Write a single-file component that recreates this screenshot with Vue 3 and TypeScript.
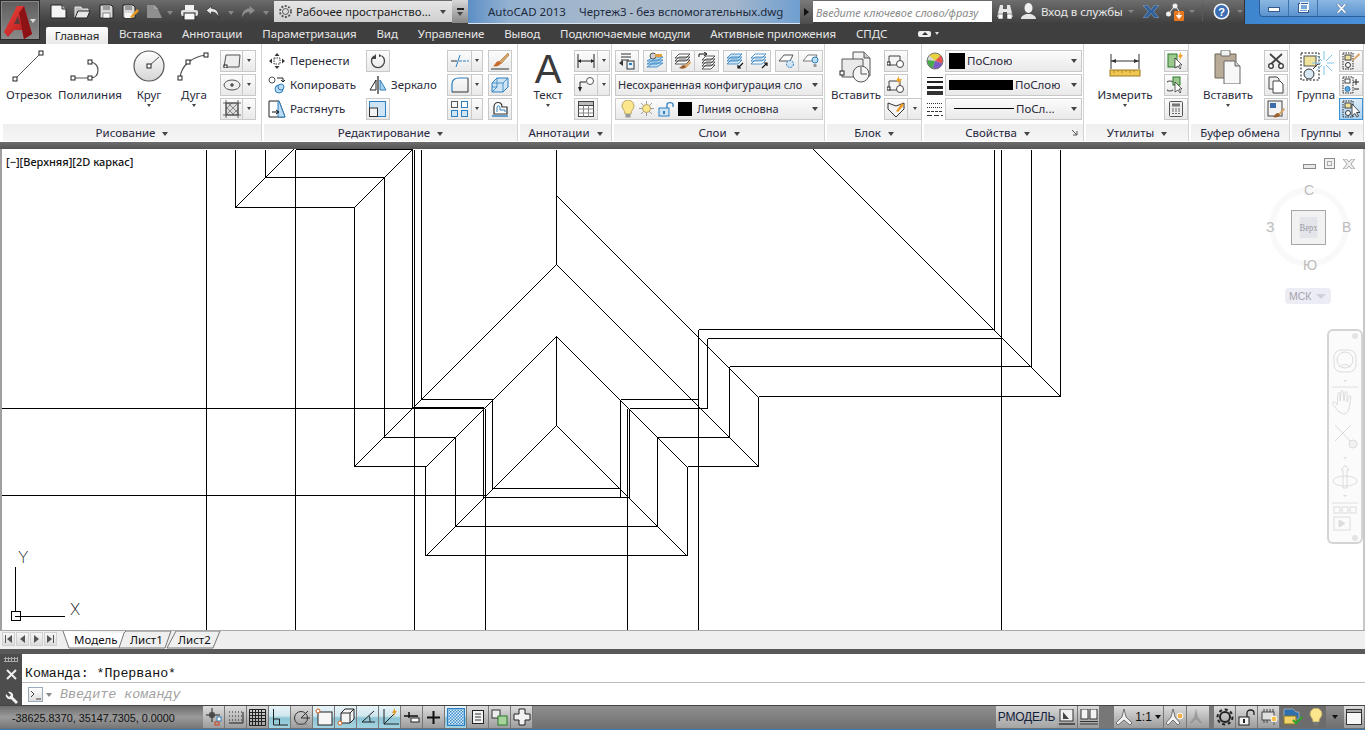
<script setup lang="ts">
type Seg = [number, number, number, number]

const tabs = ['Вставка', 'Аннотации', 'Параметризация', 'Вид', 'Управление', 'Вывод', 'Подключаемые модули', 'Активные приложения', 'СПДС']

// вертикали и горизонтали чертежа, в экранных координатах
const straight: Seg[] = [
  [206, 150, 206, 631], [295, 150, 295, 631], [235, 150, 235, 208], [265, 150, 265, 178],
  [295, 150, 412, 150], [265, 178, 384, 178], [235, 208, 354, 208],
  [354, 208, 354, 467], [384, 178, 384, 438], [412, 150, 412, 409], [414, 150, 414, 631],
  [421, 150, 421, 400], [556, 150, 556, 265], [556, 337, 556, 426],
  [421, 400, 492, 400], [492, 400, 492, 489], [492, 489, 620, 489], [620, 400, 620, 498],
  [620, 400, 698, 400], [0, 409, 484, 409], [413, 408, 483, 408], [629, 409, 707, 409],
  [483, 409, 483, 498], [485, 409, 485, 631], [627, 409, 627, 631], [629, 409, 629, 498],
  [0, 496, 484, 496], [484, 498, 629, 498],
  [698, 330, 698, 631], [707, 339, 707, 409], [729, 367, 729, 438], [758, 397, 758, 467],
  [384, 438, 455, 438], [657, 438, 729, 438], [354, 467, 425, 467], [687, 467, 758, 467],
  [455, 438, 455, 527], [425, 467, 425, 556], [657, 438, 657, 527], [687, 467, 687, 556],
  [455, 527, 657, 527], [425, 556, 687, 556],
  [698, 330, 994, 330], [707, 339, 1001, 339], [729, 367, 1031, 367], [758, 397, 1060, 397],
  [994, 150, 994, 330], [1001, 150, 1001, 631], [1031, 150, 1031, 367], [1060, 150, 1060, 397],
]

const diagonal: Seg[] = [
  [235, 208, 293, 150], [354, 208, 412, 150],
  [556, 265, 354, 467], [556, 337, 425, 468], [556, 426, 425, 557],
  [556, 265, 758, 467], [556, 337, 687, 468], [556, 426, 687, 557],
  [556, 196, 758, 398], [813, 150, 1060, 397],
]

const statusLeft = [1, 2, 3, 4, 5, 6, 7, 8, 9, 10, 11, 12, 13, 14, 15]
const activeStatus = [4, 6, 7, 8, 9, 12]
</script>

<template>
  <div class="app">
    <!-- кнопка приложения поверх обеих полос -->
    <div class="app-btn">
      <svg width="36" height="36" viewBox="0 0 36 36">
        <defs>
          <linearGradient id="redA" x1="0" y1="0" x2="1" y2="1">
            <stop offset="0" stop-color="#f2463f" />
            <stop offset="1" stop-color="#a51216" />
          </linearGradient>
        </defs>
        <path d="M15 3 L22 3 L30 31 L22 36 L20 27 L12 27 L6 34 L2 29 Z" fill="url(#redA)" />
        <path d="M22 3 L30 31 L22 36 L17 10 Z" fill="#8c1216" />
        <path d="M16 13 L18 21 L12 21 Z" fill="#5c3a3a" />
      </svg>
      <i class="caret light app-caret"></i>
    </div>

    <header class="title-bar">
      <div class="qat">
        <svg class="q-new" width="17" height="15" viewBox="0 0 17 15"><path d="M1 1h11l4 4v9H1z" fill="#f4f4f4" stroke="#222" /><path d="M12 1v4h4" fill="#bbb" stroke="#333" /></svg>
        <svg class="q-open" width="17" height="14" viewBox="0 0 17 14"><path d="M1 2h6l1 2h6v2H5L1 12z" fill="#bdbdbd" stroke="#e8e8e8" /><path d="M4 6h12l-3 7H1z" fill="#e6e6e6" stroke="#222" /></svg>
        <svg class="q-save" width="15" height="15" viewBox="0 0 15 15"><path d="M1 1h11l2 2v11H1z" fill="#d8d8d8" stroke="#222" /><rect x="4" y="1" width="7" height="5" fill="#9a9a9a" /><rect x="4" y="9" width="7" height="5" fill="#f5f5f5" stroke="#333" stroke-width=".5" /></svg>
        <svg class="q-saveas" width="17" height="15" viewBox="0 0 17 15"><path d="M1 1h10l2 2v11H1z" fill="#d8d8d8" stroke="#222" /><rect x="3" y="1" width="7" height="5" fill="#9a9a9a" /><rect x="3" y="9" width="7" height="5" fill="#f5f5f5" /><path d="M8 13l7-8 2 2-7 7z" fill="#e89a25" /></svg>
        <svg class="q-plot" width="16" height="15" viewBox="0 0 16 15"><path d="M1 1h7l4 4 4 9H1z" fill="#8f8f8f" /><path d="M8 1v4h4z" fill="#a8a8a8" /></svg>
        <i class="caret dim q-c1"></i>
        <svg class="q-print" width="17" height="15" viewBox="0 0 17 15"><rect x="4" y="0" width="9" height="5" fill="#f2f2f2" /><rect x="0" y="5" width="17" height="6" rx="2" fill="#e2e2e2" /><rect x="3" y="8" width="11" height="7" fill="#f7f7f7" stroke="#222" /></svg>
        <svg class="q-undo" width="16" height="14" viewBox="0 0 15 13"><path d="M6 1L1 5l5 4V6.500c3 0 5 1 7 5 0-6-3-8-7-8.500z" fill="#e8e8e8" stroke="#222" stroke-width=".6" /></svg>
        <i class="caret dim q-c2"></i>
        <svg class="q-redo" width="15" height="14" viewBox="0 0 14 13"><path d="M8 1l5 4-5 4V6.500c-3 0-5 1-7 5 0-6 3-8 7-8.500z" fill="#8d8d8d" /></svg>
        <i class="caret dim q-c3"></i>
      </div>
      <div class="workspace">
        <svg width="15" height="15" viewBox="0 0 15 15"><circle cx="7.500" cy="7.500" r="3" fill="none" stroke="#555" /><circle cx="7.500" cy="7.500" r="5.500" fill="none" stroke="#555" stroke-width="1.800" stroke-dasharray="2 1.500" /></svg>
        <span>Рабочее пространство...</span>
        <i class="caret"></i>
      </div>
      <div class="qat-more"><i class="more-bar"></i><i class="caret"></i></div>
      <div class="glass"><span>AutoCAD 2013</span><span class="doc">Чертеж3 - без вспомогательных.dwg</span></div>
      <div class="arrow-btn"><i class="caret-r"></i></div>
      <div class="search">Введите ключевое слово/фразу</div>
      <div class="info">
        <svg class="i-bino" width="16" height="16" viewBox="0 0 16 16"><path d="M3 1h3v4h4V1h3l3 12h-6V8H6v5H0z" fill="#e6e6e6" /><rect x="1" y="10" width="5" height="5" fill="#fff" stroke="#333" stroke-width=".5" /><rect x="10" y="10" width="5" height="5" fill="#fff" stroke="#333" stroke-width=".5" /></svg>
        <svg class="i-user" width="17" height="17" viewBox="0 0 17 17"><ellipse cx="8.500" cy="5" rx="4" ry="5" fill="#f0f0f0" /><path d="M1 16c0-3 3-4 5-5h5c2 1 5 2 5 5z" fill="#e4e4e4" /></svg>
        <span class="signin">Вход в службы</span>
        <i class="caret dim c-a"></i>
        <svg class="i-x" width="16" height="13" viewBox="0 0 18 14"><path d="M0 0h5l4 5 4-5h5l-6 7 6 7h-5L9 9l-4 5H0l6-7z" fill="#2f5f9a" stroke="#a8c4e6" stroke-width=".5" /></svg>
        <svg class="i-link" width="20" height="18" viewBox="0 0 20 18"><circle cx="2.500" cy="11" r="2.500" fill="#eee" /><circle cx="9" cy="3" r="2.500" fill="#eee" /><path d="M3 10l5-6M10 4l3 4" stroke="#eee" /><rect x="8" y="8" width="10" height="10" rx="1" fill="#e8791e" /><path d="M13 9.500v4M10.500 12.500l2.500 3 2.500-3z" fill="#fff" stroke="#fff" /></svg>
        <i class="caret dim c-b"></i>
        <i class="i-sep"></i>
        <svg class="i-help" width="17" height="17" viewBox="0 0 17 17"><circle cx="8.500" cy="8.500" r="8" fill="#f2f6fb" /><circle cx="8.500" cy="8.500" r="6.500" fill="#3c6eb4" /><text x="8.500" y="13" text-anchor="middle" class="help-q">?</text></svg>
        <i class="caret dim c-c"></i>
      </div>
      <div class="frame">
        <div class="frame-btns">
          <span class="f-min"><i></i></span>
          <span class="f-max"><i></i><b></b></span>
          <span class="f-close">
            <svg width="11" height="9" viewBox="0 0 11 9"><path d="M0 0h3l2.500 3L8 0h3L7 4.500 11 9H8L5.500 6 3 9H0l4-4.500z" fill="#fff" stroke="#36598a" stroke-width=".5" /></svg>
          </span>
        </div>
      </div>
    </header>

    <nav class="tabs">
      <span class="tab active">Главная</span>
      <span v-for="t in tabs" :key="t" class="tab">{{ t }}</span>
      <span class="tab-toggle"><i class="pill"><i class="caret-up"></i></i><i class="caret light"></i></span>
    </nav>

    <section class="ribbon">
      <!-- Рисование -->
      <div class="panel p-draw">
        <div class="body">
          <div class="big w-48">
            <div class="big-ico"><svg width="40" height="34" viewBox="0 0 40 34"><path d="M6 29L32 3" stroke="#555" fill="none" /><rect x="4" y="27" width="4" height="4" fill="#fff" stroke="#222" /><rect x="30" y="1" width="4" height="4" fill="#fff" stroke="#222" /></svg></div>
            <span>Отрезок</span>
          </div>
          <div class="big w-64 ml-5">
            <div class="big-ico"><svg width="40" height="34" viewBox="0 0 40 34"><path d="M3 28h17c6 0 8-4 8-8s-3-8-8-8" stroke="#555" stroke-width="1.200" fill="none" /><rect x="1" y="26" width="4" height="4" fill="#fff" stroke="#222" /><rect x="18" y="26" width="4" height="4" fill="#fff" stroke="#222" /><rect x="18" y="10" width="4" height="4" fill="#fff" stroke="#222" /></svg></div>
            <span>Полилиния</span>
          </div>
          <div class="big w-54">
            <div class="big-ico"><svg width="34" height="34" viewBox="0 0 34 34"><defs><linearGradient id="cg" x1="0" y1="0" x2="0" y2="1"><stop offset="0" stop-color="#fff" /><stop offset="1" stop-color="#d4d4d4" /></linearGradient></defs><circle cx="17" cy="16" r="15" fill="url(#cg)" stroke="#555" stroke-width="1.200" /><path d="M17 16L27 7" stroke="#555" /><rect x="15" y="14" width="4" height="4" fill="#fff" stroke="#222" /></svg></div>
            <span>Круг</span><i class="caret"></i>
          </div>
          <div class="big w-36">
            <div class="big-ico"><svg width="34" height="34" viewBox="0 0 34 34"><path d="M3 28C4 16 14 7 29 5" stroke="#555" stroke-width="1.200" fill="none" /><rect x="1" y="26" width="4" height="4" fill="#fff" stroke="#222" /><rect x="9" y="10" width="4" height="4" fill="#fff" stroke="#222" /><rect x="27" y="3" width="4" height="4" fill="#fff" stroke="#222" /></svg></div>
            <span>Дуга</span><i class="caret"></i>
          </div>
          <div class="col ml-8">
            <div class="split"><span class="btn w23"><svg width="18" height="14" viewBox="0 0 18 14"><path d="M3 1h14l-1 12H1z" fill="#eee" stroke="#555" /><rect x="1" y="11" width="3" height="3" fill="#fff" stroke="#222" /></svg></span><span class="drop w13"><i class="caret"></i></span></div>
            <div class="split"><span class="btn w23"><svg width="18" height="12" viewBox="0 0 18 12"><ellipse cx="9" cy="6" rx="8" ry="5" fill="#eee" stroke="#555" /><path d="M7 6h4M9 4v4" stroke="#222" /></svg></span><span class="drop w13"><i class="caret"></i></span></div>
            <div class="split"><span class="btn w23"><svg width="18" height="18" viewBox="0 0 18 18"><rect x="3" y="3" width="12" height="12" fill="#ddd" stroke="#555" /><path d="M3 9l6-6M3 15L15 3M9 15l6-6M5 3l10 10M3 7l8 8" stroke="#666" stroke-width=".7" /><path d="M0 3h18M0 15h18M3 0v18M15 0v18" stroke="#444" stroke-width=".8" /></svg></span><span class="drop w13"><i class="caret"></i></span></div>
          </div>
        </div>
        <div class="title">Рисование <i class="caret"></i></div>
      </div>

      <!-- Редактирование -->
      <div class="panel p-edit">
        <div class="body pl-4">
          <div class="col w-98">
            <div class="rowitem"><svg width="18" height="18" viewBox="0 0 18 18"><path d="M9 1l2.500 3h-5zM9 17l2.500-3h-5zM1 9l3-2.500v5zM17 9l-3-2.500v5z" fill="#333" /><rect x="6" y="6" width="6" height="6" fill="#fff" stroke="#333" stroke-dasharray="1.500 1" /></svg><span>Перенести</span></div>
            <div class="rowitem"><svg width="18" height="18" viewBox="0 0 18 18"><circle cx="4" cy="4" r="3" fill="#fff" stroke="#555" /><circle cx="11" cy="13" r="4" fill="#bcdcf2" stroke="#2c7fc0" /><circle cx="13" cy="11" r="3" fill="#bcdcf2" stroke="#2c7fc0" /><path d="M9 2h6v3M13 4l2 2 2-2" stroke="#222" fill="none" /></svg><span>Копировать</span></div>
            <div class="rowitem"><svg width="18" height="18" viewBox="0 0 18 18"><path d="M1 1h10l6 16H1z" fill="#fff" stroke="#222" /><path d="M10 1h1l6 16h-7z" fill="#bcdcf2" stroke="#2c7fc0" /><path d="M4 12h6M8 10l3 2-3 2" stroke="#111" fill="none" /></svg><span>Растянуть</span></div>
          </div>
          <div class="col w-76">
            <span class="btn w24"><svg width="16" height="16" viewBox="0 0 16 16"><path d="M4 3a6.500 6.500 0 1 0 8 0" stroke="#444" stroke-width="1.300" fill="none" /><path d="M5 0v5H0z" fill="#444" transform="translate(1 1)" /><path d="M9 1l3 2-3 1" fill="#444" /></svg></span>
            <div class="rowitem mirror"><svg width="18" height="18" viewBox="0 0 18 18"><path d="M9 0v18" stroke="#222" stroke-width="1.200" /><path d="M7 4v10H1z" fill="#fff" stroke="#222" /><path d="M11 4v10h6z" fill="#a8d3ef" stroke="#2c7fc0" /></svg><span>Зеркало</span></div>
            <span class="btn w24"><svg width="18" height="16" viewBox="0 0 18 16"><rect x=".5" y=".5" width="16" height="15" fill="#cfe4f4" stroke="#2c7fc0" /><rect x=".5" y="7" width="8" height="8.500" fill="#f4f4f4" stroke="#333" /></svg></span>
          </div>
          <div class="col ml-5">
            <div class="split"><span class="btn w25"><svg width="18" height="14" viewBox="0 0 18 14"><path d="M0 7h6" stroke="#333" /><path d="M8 7h10" stroke="#2c7fc0" stroke-dasharray="3 1" /><path d="M5 13l4-12" stroke="#2c7fc0" /></svg></span><span class="drop w11"><i class="caret"></i></span></div>
            <div class="split"><span class="btn w25"><svg width="18" height="16" viewBox="0 0 18 16"><path d="M1 15V7c0-4 3-6 7-6h9" fill="none" stroke="#2c7fc0" stroke-width="1.200" /><path d="M17 1v14" stroke="#333" /><path d="M1 15h16" stroke="#333" /></svg></span><span class="drop w11"><i class="caret"></i></span></div>
            <div class="split"><span class="btn w25"><svg width="18" height="16" viewBox="0 0 18 16"><rect x=".5" y=".5" width="6" height="6" fill="none" stroke="#555" /><rect x="10.500" y=".5" width="6" height="6" fill="#fff" stroke="#2c7fc0" /><rect x=".5" y="9.500" width="6" height="6" fill="#cfe4f4" stroke="#2c7fc0" /><rect x="10.500" y="9.500" width="6" height="6" fill="#cfe4f4" stroke="#2c7fc0" /></svg></span><span class="drop w11"><i class="caret"></i></span></div>
          </div>
          <div class="col ml-5">
            <span class="btn w24"><svg width="18" height="18" viewBox="0 0 18 18"><path d="M17 1l-9 9 2 2 8-9z" fill="#d9a465" stroke="#8a5a2a" stroke-width=".5" /><path d="M8 9c-3 0-3 3-6 5 3 1 7 0 8-3z" fill="#c96b2c" /><path d="M0 17h18" stroke="#333" /></svg></span>
            <span class="btn w24"><svg width="18" height="16" viewBox="0 0 18 16"><path d="M1 6l5-5h11v9l-5 5H1z" fill="#cfe4f4" stroke="#2c7fc0" /><path d="M1 6h11v9M12 6l5-5M6 1v9H1M6 10l-5 5" fill="none" stroke="#2c7fc0" stroke-width=".8" /></svg></span>
            <span class="btn w24"><svg width="18" height="16" viewBox="0 0 18 16"><path d="M3 13V6c0-6 8-6 8 0h5v7z" fill="#fff" stroke="#333" stroke-width="1.200" /><path d="M1 15h16" stroke="#2c7fc0" stroke-width="1.400" /><path d="M6 11V7c0-3 3-3 3 0v2h5v2" fill="none" stroke="#2c7fc0" /></svg></span>
          </div>
        </div>
        <div class="title">Редактирование <i class="caret"></i></div>
      </div>

      <!-- Аннотации -->
      <div class="panel p-ann">
        <div class="body pl-2">
          <div class="big w-52">
            <div class="big-ico"><svg class="a-glyph" width="40" height="37" viewBox="0 0 40 37"><text x="20" y="33" text-anchor="middle">A</text></svg></div>
            <span>Текст</span><i class="caret"></i>
          </div>
          <div class="col">
            <div class="split"><span class="btn w24"><svg width="18" height="14" viewBox="0 0 18 14"><path d="M1 0v14M17 0v14" stroke="#222" /><path d="M1 7h16" stroke="#222" /><path d="M1 7l3-2v4zM17 7l-3-2v4z" fill="#222" /></svg></span><span class="drop w12"><i class="caret"></i></span></div>
            <div class="split"><span class="btn w24"><svg width="18" height="16" viewBox="0 0 18 16"><circle cx="13" cy="4" r="3.500" fill="#fff" stroke="#555" /><path d="M9 5H3v6" stroke="#222" fill="none" /><path d="M3 15l-2-5h4z" fill="#222" /></svg></span><span class="drop w12"><i class="caret"></i></span></div>
            <span class="btn w24"><svg width="16" height="16" viewBox="0 0 16 16"><rect x=".5" y=".5" width="15" height="15" fill="#fff" stroke="#444" /><rect x=".5" y=".5" width="15" height="4" fill="#bbb" stroke="#444" /><path d="M5.500 4.500v11M10.500 4.500v11M.5 8h15M.5 12h15" stroke="#888" /></svg></span>
          </div>
        </div>
        <div class="title">Аннотации <i class="caret"></i></div>
      </div>

      <!-- Слои -->
      <div class="panel p-layers">
        <div class="body pl-1">
          <div class="stack">
            <div class="icon-row">
              <span class="btn w24"><svg width="18" height="18" viewBox="0 0 18 18"><path d="M3 2h10M3 5h10M3 8h8" stroke="#333" /><path d="M1 11l4-3v6z" fill="#333" /><rect x="9" y="9" width="7" height="8" fill="#e8f2fa" stroke="#333" /><rect x="11" y="11" width="3" height="2" fill="#2c7fc0" /></svg></span>
              <span class="btn w24"><svg width="18" height="18" viewBox="0 0 18 18"><path d="M1 9l6-4h10l-6 4zM1 12l6-4h10l-6 4zM1 15l6-4h10l-6 4z" fill="#bcdcf2" stroke="#2c7fc0" stroke-width=".8" /><circle cx="7" cy="4" r="3" fill="#cfcfcf" stroke="#555" /><rect x="9" y="2" width="7" height="3" fill="#e0a040" /></svg></span>
              <span class="btn-group">
                <span class="btn w24"><svg width="18" height="18" viewBox="0 0 18 18"><path d="M1 6l4-4h11l-4 4zM1 9l4-4h11l-4 4zM1 12l4-4h11l-4 4z" fill="#fff" stroke="#333" stroke-width=".8" /><path d="M16 9l-6 5 2 2 5-5z" fill="#d9a465" /><path d="M10 13c-2 0-3 2-5 3 3 1 6 1 7-1z" fill="#9a5d2b" /></svg></span>
                <span class="btn w24"><svg width="18" height="18" viewBox="0 0 18 18"><path d="M4 8l4-4h9l-4 4zM4 11l4-4h9l-4 4zM4 14l4-4h9l-4 4zM4 17l4-4h9l-4 4z" fill="#fff" stroke="#333" stroke-width=".8" /><path d="M1 5V2h7M6 0l3 2-3 2" stroke="#111" fill="none" /></svg></span>
              </span>
              <span class="btn-group">
                <span class="btn w24"><svg width="18" height="18" viewBox="0 0 18 18"><path d="M1 6l4-4h11l-4 4zM1 9l4-4h11l-4 4zM1 12l4-4h11l-4 4z" fill="#cfe4f4" stroke="#2c7fc0" stroke-width=".8" /><path d="M17 11l-5 5M12 13v3h3" stroke="#111" fill="none" stroke-width="1.200" /></svg></span>
                <span class="btn w24"><svg width="18" height="18" viewBox="0 0 18 18"><path d="M1 6l4-4h11l-4 4zM1 9l4-4h11l-4 4zM1 12l4-4h11l-4 4z" fill="#fff" stroke="#2c7fc0" stroke-width=".8" /><path d="M12 16l5-5M14 11h3v3" stroke="#111" fill="none" stroke-width="1.200" /></svg></span>
              </span>
              <span class="btn-group">
                <span class="btn w24"><svg width="18" height="18" viewBox="0 0 18 18"><path d="M1 9l5-6h9l-3 6z" fill="#fff" stroke="#555" /><circle cx="12" cy="12" r="3.500" fill="#cfe4f4" stroke="#2c7fc0" stroke-dasharray="2 1" /></svg></span>
                <span class="btn w24"><svg width="18" height="18" viewBox="0 0 18 18"><path d="M1 9l5-6h9l-3 6z" fill="#fff" stroke="#777" /><circle cx="13" cy="8" r="3" fill="#bcdcf2" stroke="#2c7fc0" /><path d="M11.500 12h3v3h-3z" fill="#999" /></svg></span>
              </span>
            </div>
            <div class="combo w-208 cfg"><span class="combo-text">Несохраненная конфигурация сло</span><i class="caret"></i></div>
            <div class="combo w-208 layer">
              <svg class="bulb" width="14" height="18" viewBox="0 0 14 18"><path d="M7 0a6 6 0 0 0-6 6c0 3 3 4 3 8h6c0-4 3-5 3-8a6 6 0 0 0-6-6z" fill="#fbe58d" stroke="#b5a46a" /><rect x="4.500" y="14" width="5" height="3.500" fill="#999" /></svg>
              <svg class="sun" width="15" height="15" viewBox="0 0 15 15"><path d="M7.500 0v15M0 7.500h15M2 2l11 11M13 2L2 13" stroke="#888" stroke-width=".8" /><circle cx="7.500" cy="7.500" r="4" fill="#fbe58d" stroke="#b5a46a" /></svg>
              <svg class="lock" width="16" height="16" viewBox="0 0 16 16"><path d="M9 7V3.500C9 1 15 1 15 3.500V6" fill="none" stroke="#2c7fc0" stroke-width="1.300" /><rect x="1" y="7" width="10" height="8" fill="#cfe4f4" stroke="#2c7fc0" /><rect x="5" y="10" width="2" height="3" fill="#2c7fc0" /></svg>
              <i class="swatch s14"></i>
              <span class="combo-text">Линия основна</span><i class="caret"></i>
            </div>
          </div>
        </div>
        <div class="title">Слои <i class="caret"></i></div>
      </div>

      <!-- Блок -->
      <div class="panel p-block">
        <div class="body pl-5">
          <div class="big w-48">
            <div class="big-ico"><svg width="34" height="34" viewBox="0 0 34 34"><path d="M14 2h11l6 6v18H14z" fill="#f2f2f2" stroke="#555" /><path d="M25 2v6h6" fill="#ccc" stroke="#555" /><path d="M3 9h21v18H3z" fill="#eaeaea" stroke="#555" /><rect x="1" y="21" width="4" height="4" fill="#fff" stroke="#222" /><circle cx="22" cy="24" r="8" fill="#f5f5f5" stroke="#555" /><path d="M22 17v7h6" stroke="#555" fill="none" /></svg></div>
            <span>Вставить</span>
          </div>
          <div class="col ml-4">
            <span class="btn w24"><svg width="18" height="16" viewBox="0 0 18 16"><path d="M2 3h11v9H2z" fill="#f5f5f5" stroke="#444" /><rect x="0" y="9" width="3" height="3" fill="#fff" stroke="#222" /><circle cx="13" cy="11" r="3.500" fill="#fff" stroke="#444" /></svg></span>
            <span class="btn w24"><svg width="18" height="18" viewBox="0 0 18 18"><path d="M2 5h11v9H2z" fill="#f5f5f5" stroke="#444" /><rect x="0" y="11" width="3" height="3" fill="#fff" stroke="#222" /><circle cx="13" cy="13" r="3.500" fill="#fff" stroke="#444" /><path d="M12 0L9 5h3l-1 4 4-6h-3z" fill="#f2a422" /></svg></span>
            <div class="split"><span class="btn w24"><svg width="18" height="18" viewBox="0 0 18 18"><path d="M1 3l8 3 8-3v6l-8 8-8-8z" fill="#f4f4f4" stroke="#333" /><path d="M9 11l6-8 2 2-6 7z" fill="#e89a25" /></svg></span><span class="drop w14"><i class="caret"></i></span></div>
          </div>
        </div>
        <div class="title">Блок <i class="caret"></i></div>
      </div>

      <!-- Свойства -->
      <div class="panel p-props">
        <div class="body pl-1">
          <div class="prop-icons">
            <svg width="18" height="18" viewBox="0 0 18 18"><defs><clipPath id="cw"><circle cx="9" cy="9" r="8" /></clipPath></defs><g clip-path="url(#cw)"><rect width="18" height="18" fill="#d8d8d8" /><path d="M9 9L0 0h18z" fill="#e5d23c" /><path d="M9 9L18 0v12z" fill="#e8534a" /><path d="M9 9l9 3-3 6H6z" fill="#7b5bc6" /><path d="M9 9l-3 9H0V8z" fill="#48a84a" /></g><circle cx="9" cy="9" r="8" fill="none" stroke="#777" /></svg>
            <svg width="16" height="18" viewBox="0 0 16 18"><rect y="0" width="16" height="1" fill="#222" /><rect y="4" width="16" height="2" fill="#222" /><rect y="9" width="16" height="3" fill="#222" /><rect y="14" width="16" height="4" fill="#333" /></svg>
            <svg width="16" height="16" viewBox="0 0 16 16"><path d="M0 1.500h16M0 5.500h16" stroke="#333" stroke-dasharray="1 1" /><path d="M0 9.500h16" stroke="#333" stroke-dasharray="3 1" /><path d="M0 13.500h16" stroke="#333" stroke-dasharray="5 2" /></svg>
          </div>
          <div class="stack">
            <div class="combo w-137"><i class="swatch s16"></i><span class="combo-text">ПоСлою</span><i class="caret"></i></div>
            <div class="combo w-137"><i class="bar thick"></i><span class="combo-text">ПоСлою</span><i class="caret"></i></div>
            <div class="combo w-137"><i class="bar thin"></i><span class="combo-text">ПоСл...</span><i class="caret"></i></div>
          </div>
        </div>
        <div class="title props-title">Свойства <i class="caret"></i><svg class="launcher" width="6" height="6" viewBox="0 0 6 6"><path d="M0 0l5 5M5 1v4H1" stroke="#555" fill="none" /></svg></div>
      </div>

      <!-- Утилиты -->
      <div class="panel p-util">
        <div class="body pl-4">
          <div class="big w-70">
            <div class="big-ico"><svg width="32" height="30" viewBox="0 0 32 30"><path d="M2 4v15M30 4v15M2 11h28" stroke="#333" /><path d="M2 11l5-2v4zM30 11l-5-2v4z" fill="#333" /><rect x="1" y="20" width="30" height="6" fill="#eec650" stroke="#9b7a1e" /><path d="M5 20v3M9 20v2M13 20v3M17 20v2M21 20v3M25 20v2" stroke="#9b7a1e" stroke-width=".7" /></svg></div>
            <span>Измерить</span><i class="caret"></i>
          </div>
          <div class="col ml-4">
            <span class="btn w24"><svg width="18" height="18" viewBox="0 0 18 18"><rect x="1" y="2" width="9" height="13" fill="#9cc890" stroke="#2a7a2a" /><path d="M8 6v10l3-2 2 3 1-1-2-3h3z" fill="#fff" stroke="#222" stroke-width=".7" /><path d="M14 0l-3 5h2l-1 4 4-6h-2z" fill="#f2a422" /></svg></span>
            <span class="btn w24"><svg width="18" height="18" viewBox="0 0 18 18"><rect x="6" y="1" width="7" height="8" fill="#9cc890" stroke="#2a7a2a" /><path d="M6 6a5 5 0 1 0 0 8" fill="none" stroke="#555" stroke-width="1.200" /><path d="M8 6v10l3-2 2 3 1-1-2-3h3z" fill="#fff" stroke="#222" stroke-width=".7" /></svg></span>
            <span class="btn w24"><svg width="14" height="16" viewBox="0 0 14 16"><rect x=".5" y=".5" width="13" height="15" rx="1" fill="#eee" stroke="#555" /><rect x="3" y="2.500" width="8" height="3" fill="#777" /><path d="M3 8h2M6 8h2M9 8h2M3 10h2M6 10h2M9 10h2M3 12.500h2M6 12.500h2M9 12.500h2" stroke="#666" stroke-width="1.200" /></svg></span>
          </div>
        </div>
        <div class="title">Утилиты <i class="caret"></i></div>
      </div>

      <!-- Буфер обмена -->
      <div class="panel p-clip">
        <div class="body pl-5">
          <div class="big w-64">
            <div class="big-ico"><svg width="28" height="34" viewBox="0 0 28 34"><path d="M1 4h21v24H1z" fill="#b8ab98" stroke="#6f6656" /><rect x="7" y="0" width="9" height="6" rx="1" fill="#f2f2f2" stroke="#666" /><path d="M10 11h11l5 5v18H10z" fill="#f7f7f7" stroke="#666" /><path d="M21 11v5h5" fill="#ccc" stroke="#666" /></svg></div>
            <span>Вставить</span><i class="caret"></i>
          </div>
          <div class="col ml-4">
            <span class="btn w24"><svg width="16" height="16" viewBox="0 0 16 16"><path d="M2 1l11 10M14 1L3 11" stroke="#444" stroke-width="1.800" /><circle cx="3" cy="13" r="2.300" fill="#fff" stroke="#333" stroke-width="1.300" /><circle cx="13" cy="13" r="2.300" fill="#fff" stroke="#333" stroke-width="1.300" /></svg></span>
            <span class="btn w24"><svg width="16" height="18" viewBox="0 0 16 18"><path d="M1 1h8l2 2v10H1z" fill="#f0f0f0" stroke="#444" /><path d="M5 5h7l3 3v9H5z" fill="#fff" stroke="#444" /></svg></span>
            <span class="btn w24"><svg width="18" height="18" viewBox="0 0 18 18"><rect x="1" y="1" width="14" height="15" fill="#f2f2f2" stroke="#444" /><rect x="3" y="3" width="6" height="5" fill="#3b6ba8" /><path d="M17 8l-6 6 1.500 1.500 5.500-6z" fill="#d9a465" /><path d="M11 13c-2 0-3 2-5 4 3 1 6 0 7-2z" fill="#9a5d2b" /></svg></span>
          </div>
        </div>
        <div class="title">Буфер обмена</div>
      </div>

      <!-- Группы -->
      <div class="panel p-group">
        <div class="body pl-1">
          <div class="big w-46">
            <div class="big-ico"><svg width="36" height="36" viewBox="0 0 36 36"><rect x="3" y="3" width="18" height="27" fill="none" stroke="#111" stroke-dasharray="2 1.500" /><rect x="6" y="6" width="12" height="10" fill="#f0e39c" stroke="#555" /><circle cx="11" cy="24" r="5" fill="#d8e8f2" stroke="#333" /><path d="M15 19l5-5" stroke="#333" /><path d="M26 1v24M14 13h22M18 5l16 16M34 5L18 21" stroke="#7cc3ec" stroke-width="1" /><circle cx="26" cy="13" r="3" fill="#fff" /></svg></div>
            <span>Группа</span>
          </div>
          <div class="col">
            <span class="btn w24"><svg width="18" height="18" viewBox="0 0 18 18"><rect x="1" y="1" width="10" height="16" fill="none" stroke="#222" stroke-dasharray="1.500 1" /><rect x="3" y="3" width="6" height="5" fill="#f0e39c" stroke="#444" /><circle cx="6" cy="13" r="2.500" fill="#fff" stroke="#333" /><path d="M17 1l-7 7 1 1 7-6z" fill="#d9a465" /></svg></span>
            <span class="btn w24"><svg width="18" height="18" viewBox="0 0 18 18"><rect x="1" y="1" width="10" height="16" fill="none" stroke="#222" stroke-dasharray="1.500 1" /><rect x="3" y="3" width="5" height="4" fill="#fff" stroke="#444" /><circle cx="5.500" cy="13" r="2.500" fill="#5ba5d8" stroke="#2c7fc0" /><path d="M11 6h6M14 3v6M12 13h5" stroke="#222" /></svg></span>
            <span class="btn w24 selected"><svg width="18" height="18" viewBox="0 0 18 18"><rect x="1" y="1" width="10" height="16" fill="none" stroke="#222" stroke-dasharray="1.500 1" /><rect x="3" y="3" width="6" height="5" fill="#f0e39c" stroke="#444" /><circle cx="6" cy="13" r="2.500" fill="#fff" stroke="#333" /><path d="M10 4v12l3-2.500 2 3.500 1.500-1-2-3.500H18z" fill="#fff" stroke="#222" stroke-width=".8" /></svg></span>
          </div>
        </div>
        <div class="title">Группы <i class="caret"></i></div>
      </div>
    </section>

    <div class="ribbon-gap"></div>

    <main class="viewport">
      <svg class="drawing" width="1365" height="481" viewBox="0 150 1365 481">
        <line v-for="(s, i) in straight" :key="'s' + i" :x1="s[0] + 0.5" :y1="s[1] + 0.5" :x2="s[2] + 0.5" :y2="s[3] + 0.5" />
        <line v-for="(s, i) in diagonal" :key="'d' + i" :x1="s[0] + 0.5" :y1="s[1] + 0.5" :x2="s[2] + 0.5" :y2="s[3] + 0.5" />
        <!-- значок ПСК -->
        <line x1="15.500" y1="568" x2="15.500" y2="612" />
        <line x1="15" y1="617.500" x2="65" y2="617.500" />
        <rect x="11.500" y="612.500" width="9" height="9" fill="none" stroke="#000" />
      </svg>
      <span class="ucs-y">Y</span>
      <span class="ucs-x">X</span>
      <div class="vp-label">[−][Верхняя][2D каркас]</div>

      <div class="vp-controls">
        <span class="vc-min"></span>
        <span class="vc-max"></span>
        <span class="vc-close">
          <svg width="12" height="10" viewBox="0 0 12 10"><path d="M0 0h3.500L6 3l2.500-3H12L8 5l4 5H8.500L6 7l-2.500 3H0l4-5z" fill="#eee" stroke="#888" stroke-width=".7" /></svg>
        </span>
      </div>

      <div class="cube">
        <svg class="cube-ring" width="96" height="96" viewBox="0 0 96 96"><circle cx="48" cy="48" r="37" fill="none" stroke="#f9f9f9" stroke-width="6" /></svg>
        <span class="c-n">С</span>
        <span class="c-w">З</span>
        <span class="c-e">В</span>
        <span class="c-s">Ю</span>
        <div class="c-face"><span>Верх</span></div>
      </div>
      <div class="ucs-pill"><span>МСК</span><i></i></div>

      <div class="navbar">
        <svg width="32" height="212" viewBox="0 0 32 212" fill="none" stroke="#dcdcdc">
          <circle cx="26" cy="5" r="3" fill="#e4e4e4" stroke="none" />
          <rect x="5" y="19" width="22" height="22" rx="7" />
          <circle cx="16" cy="29" r="8" />
          <path d="M10 36c3-3 9-3 12 0" />
          <path d="M14 49h4l-2 2z" fill="#ddd" stroke="none" />
          <path d="M3 56h26" stroke="#e0e0e0" />
          <path d="M9 80c-3-4-6-7-5-9 1-1 3 1 4 3l1-11c0-2 2-2 2 0v7l1-9c0-2 2-2 2 0l1 9 1-8c0-2 2-2 2 0l0 9 2-6c1-1 2 0 2 1l-2 12c-1 3-3 5-6 5z" />
          <path d="M6 94l16 17M22 94L6 110" />
          <circle cx="24" cy="113" r="4" fill="#f2f2f2" />
          <path d="M14 126h4l-2 2z" fill="#ddd" stroke="none" />
          <path d="M16 134l-4 5h2v18h4v-18h2zM4 150c0-3 6-5 12-5s12 2 12 5-6 5-12 5-12-2-12-5z" />
          <path d="M14 164h4l-2 2z" fill="#ddd" stroke="none" />
          <path d="M3 172h26" stroke="#e0e0e0" />
          <rect x="5" y="176" width="6" height="6" /><rect x="13" y="176" width="6" height="6" /><rect x="21" y="176" width="6" height="6" />
          <rect x="5" y="186" width="16" height="13" /><path d="M10 189l6 3.500-6 3.500z" fill="#ddd" />
          <circle cx="26" cy="207" r="3" fill="#e4e4e4" stroke="none" />
        </svg>
      </div>
    </main>

    <div class="layout-tabs">
      <div class="lt-nav">
        <span><i class="bar-l"></i><i class="tri-l"></i></span>
        <span><i class="tri-l"></i></span>
        <span><i class="tri-r"></i></span>
        <span><i class="tri-r"></i><i class="bar-r"></i></span>
      </div>
      <svg class="lt-shape" width="160" height="19" viewBox="0 0 160 19" fill="none" stroke="#777">
        <path d="M1 0l6 17h50l5-15" fill="#fff" />
        <path d="M57 17h46l6-17M62 2l2-2h45" />
        <path d="M105 17h46l7-17h-44l-9 17" />
      </svg>
      <span class="lt-tab t1">Модель</span>
      <span class="lt-tab t2">Лист1</span>
      <span class="lt-tab t3">Лист2</span>
    </div>

    <div class="cmd">
      <div class="cmd-side">
        <i class="grip"></i>
        <svg class="cmd-x" width="11" height="11" viewBox="0 0 11 11"><path d="M1 1l9 9M10 1l-9 9" stroke="#eee" stroke-width="2" /></svg>
        <svg class="cmd-w" width="14" height="14" viewBox="0 0 14 14"><path d="M1 3l3 3 2-2-3-3c3-1 6 2 5 5l5 5-2 2-5-5C3 9 0 6 1 3z" fill="#f2f2f2" /></svg>
      </div>
      <div class="cmd-main">
        <div class="cmd-hist">Команда: *Прервано*</div>
        <div class="cmd-input">
          <span class="prompt"><svg width="12" height="10" viewBox="0 0 12 10"><path d="M1 1l3 3-3 3M6 9h5" stroke="#444" fill="none" /></svg></span>
          <i class="caret soft"></i>
          <span>Введите команду</span>
        </div>
      </div>
    </div>

    <footer class="status">
      <div class="coords">-38625.8370, 35147.7305, 0.0000</div>
      <div class="st-group">
        <span v-for="n in statusLeft" :key="n" class="st" :class="{ on: activeStatus.includes(n) }">
          <svg v-if="n === 1" width="18" height="18" viewBox="0 0 18 18"><path d="M7 0v14M1 7h14" stroke="#222" /><rect x="5" y="5" width="4" height="4" fill="none" stroke="#222" /><rect x="12" y="9" width="4" height="4" fill="#fff" stroke="#2c7fc0" /><rect x="10" y="14" width="4" height="3" fill="none" stroke="#d0401c" /></svg>
          <svg v-else-if="n === 2" width="16" height="14" viewBox="0 0 16 14"><path d="M1 2h14M1 6h14M1 10h14" stroke="#222" stroke-dasharray="1 2" /><path d="M1 13h14" stroke="#222" /><path d="M15 2v11" stroke="#222" /></svg>
          <svg v-else-if="n === 3" width="17" height="17" viewBox="0 0 17 17"><path d="M.5 .5h16v16H.5zM3.500 .5v16M6.500 .5v16M9.500 .5v16M12.500 .5v16M.5 3.500h16M.5 6.500h16M.5 9.500h16M.5 12.500h16" stroke="#222" fill="none" /></svg>
          <svg v-else-if="n === 4" width="17" height="17" viewBox="0 0 17 17"><path d="M2.500 0v16H17M2.500 10h6v6" stroke="#222" fill="none" /></svg>
          <svg v-else-if="n === 5" width="17" height="15" viewBox="0 0 17 15"><circle cx="8" cy="8" r="6.500" fill="none" stroke="#333" /><path d="M8 8h9M8 8l7-7" stroke="#333" /><path d="M3 14h11" stroke="#777" /></svg>
          <svg v-else-if="n === 6" width="18" height="18" viewBox="0 0 18 18"><rect x="3" y="4" width="14" height="13" fill="#f6f6f6" stroke="#222" /><circle cx="3" cy="3" r="2" fill="#fff" stroke="#d0601c" /></svg>
          <svg v-else-if="n === 7" width="18" height="18" viewBox="0 0 18 18"><path d="M4 5l4-4h9v10l-4 4H4z" fill="#f4f4f4" stroke="#222" /><path d="M4 5h9v10M13 5l4-4" fill="none" stroke="#222" /><circle cx="3" cy="15" r="2" fill="#fff" stroke="#d0601c" /></svg>
          <svg v-else-if="n === 8" width="16" height="14" viewBox="0 0 16 14"><path d="M14 1L2 12h13" stroke="#222" fill="none" /><path d="M9 6c1 2 1 4 1 6" stroke="#222" fill="none" /></svg>
          <svg v-else-if="n === 9" width="18" height="18" viewBox="0 0 18 18"><path d="M3 1v15h15" stroke="#222" fill="none" /><path d="M3 16L13 6" stroke="#222" /><path d="M14 0l-3 5h2l-1 4 4-6h-2z" fill="#e89a25" /></svg>
          <svg v-else-if="n === 10" width="16" height="11" viewBox="0 0 16 11"><path d="M5 0v6M0 4h14" stroke="#111" stroke-width="1.500" /><rect x="7" y="6" width="8" height="4" fill="#fff" stroke="#222" /></svg>
          <svg v-else-if="n === 11" width="13" height="13" viewBox="0 0 13 13"><path d="M6.500 0v13M0 6.500h13" stroke="#111" stroke-width="2" /></svg>
          <svg v-else-if="n === 12" width="18" height="18" viewBox="0 0 18 18"><defs><pattern id="chk" width="3" height="3" patternUnits="userSpaceOnUse"><rect width="3" height="3" fill="#dcecf8" /><rect width="1.500" height="1.500" fill="#3d8fd0" /><rect x="1.500" y="1.500" width="1.500" height="1.500" fill="#3d8fd0" /></pattern></defs><rect x=".5" y=".5" width="17" height="17" fill="url(#chk)" stroke="#2c7fc0" /></svg>
          <svg v-else-if="n === 13" width="12" height="14" viewBox="0 0 12 14"><rect x=".5" y=".5" width="11" height="13" fill="#f3f3f3" stroke="#222" /><path d="M3 4h6M3 7h6M3 10h6" stroke="#333" /></svg>
          <svg v-else-if="n === 14" width="17" height="17" viewBox="0 0 17 17"><rect x="1" y="1" width="8" height="8" fill="#eee" stroke="#333" /><rect x="7" y="7" width="9" height="9" fill="#a6d49a" stroke="#2a7a2a" /></svg>
          <svg v-else width="18" height="18" viewBox="0 0 18 18"><path d="M6 1h6v5h5v6h-5v5H6v-5H1V6h5z" fill="#f2f2f2" stroke="#222" /></svg>
        </span>
      </div>
      <div class="st-spacer"></div>
      <span class="rmodel">РМОДЕЛЬ</span>
      <span class="st w20"><svg width="16" height="16" viewBox="0 0 16 16"><rect x="1" y="0" width="13" height="12" fill="#f0f0f0" stroke="#333" /><path d="M4 10V3l6 7z" fill="#444" /><path d="M0 15h16" stroke="#333" stroke-width="1.500" /></svg></span>
      <span class="st w22"><svg width="18" height="16" viewBox="0 0 18 16"><rect x="1" y="0" width="7" height="10" fill="#f4f4f4" stroke="#333" /><rect x="10" y="0" width="7" height="10" fill="#f4f4f4" stroke="#333" /><path d="M0 12.500h18M0 15h18" stroke="#333" /></svg></span>
      <span class="st-block"></span>
      <span class="st w50 anno">
        <svg width="16" height="17" viewBox="0 0 16 17"><path d="M8 0l2 8 6 6-2 2-6-5-6 5-2-2 6-6z" fill="#f1f1f1" stroke="#444" stroke-width=".7" /></svg>
        <span>1:1</span><i class="caret blk"></i>
      </span>
      <span class="st w23"><svg width="18" height="17" viewBox="0 0 18 17"><path d="M7 0l2 8 5 6-2 2-5-5-5 5-2-2 5-6z" fill="#f1f1f1" stroke="#444" stroke-width=".7" /><circle cx="14" cy="7" r="3" fill="#f6b04c" stroke="#fff" /></svg></span>
      <span class="st w23"><svg width="18" height="17" viewBox="0 0 18 17"><path d="M7 0l2 8 5 6-2 2-5-5-5 5-2-2 5-6z" fill="#9a9a9a" stroke="#b6b6b6" stroke-width=".7" /></svg></span>
      <span class="st-block small"></span>
      <span class="st w22"><svg width="18" height="18" viewBox="0 0 18 18"><circle cx="9" cy="9" r="5" fill="none" stroke="#222" stroke-width="2" /><circle cx="9" cy="9" r="7.500" fill="none" stroke="#222" stroke-width="2" stroke-dasharray="3 2.800" /></svg></span>
      <span class="st w22"><svg width="17" height="17" viewBox="0 0 17 17"><path d="M9 8V4c0-4 7-4 7 0v2" fill="none" stroke="#222" stroke-width="1.300" /><rect x="1" y="8" width="10" height="8" fill="#f4f4f4" stroke="#222" /><rect x="5" y="10" width="2" height="4" fill="#222" /></svg></span>
      <span class="st w22"><svg width="18" height="17" viewBox="0 0 18 17"><rect x="2" y="3" width="12" height="8" fill="#e0e0e0" stroke="#444" /><path d="M4 0v3M7 0v3M10 0v3M13 0v3M4 11v3M7 11v3" stroke="#444" /><circle cx="14" cy="10" r="3" fill="#f6c04c" stroke="#fff" /><rect x="13" y="13" width="2" height="3" fill="#888" /></svg></span>
      <span class="tray">
        <svg width="20" height="18" viewBox="0 0 20 18"><path d="M1 1h9l3 3h3v7H1z" fill="#2f6fae" stroke="#ddd" stroke-width=".5" /><rect x="1" y="8" width="12" height="8" fill="#f2d36a" stroke="#8a7322" /><path d="M10 12l3 3 6-6" stroke="#2fa02f" stroke-width="2.200" fill="none" /></svg>
        <svg width="14" height="18" viewBox="0 0 14 18"><path d="M7 0a6 6 0 0 0-6 6c0 3 3 4 3 8h6c0-4 3-5 3-8a6 6 0 0 0-6-6z" fill="#fbe58d" stroke="#b5a46a" /><rect x="4.500" y="14" width="5" height="3.500" fill="#777" /></svg>
      </span>
      <span class="st-arrow"><i class="caret blk"></i></span>
      <span class="st w20"><svg width="16" height="16" viewBox="0 0 16 16"><rect x=".5" y=".5" width="15" height="15" fill="#f7f7f7" stroke="#333" /><rect x=".5" y=".5" width="15" height="3" fill="#aaa" stroke="#333" /></svg></span>
      <div class="taskstrip"></div>
    </footer>
  </div>
</template>

<style scoped>
.app {
  position: relative;
  width: 1365px;
  height: 730px;
  overflow: hidden;
  display: flex;
  flex-direction: column;
  font-family: "Noto Sans", "Liberation Sans", sans-serif;
  font-size: 11.5px;
  color: #2a2a3a;
  background: #fff;
}

i { display: block; font-style: normal; }
svg { display: block; flex: none; }

.caret {
  display: inline-block;
  width: 0;
  height: 0;
  border-left: 3.5px solid transparent;
  border-right: 3.5px solid transparent;
  border-top: 4px solid #444;
}
.caret.light { border-top-color: #ddd; }
.caret.dim { border-top-color: #888; }
.caret.blk { border-top-color: #111; }
.caret.soft { border-top-color: #888; }

/* заголовок */
.app-btn {
  position: absolute;
  left: 0;
  top: 0;
  width: 40px;
  height: 40px;
  box-sizing: border-box;
  background: linear-gradient(#5e5e5e, #8a8a8a);
  border: 1px solid #2a2a2a;
  box-shadow: inset 0 0 0 1px #8a8a8a;
  padding: 2px 0 0 1px;
  z-index: 3;
}
.app-caret { position: absolute; left: 29px; top: 18px; }

.title-bar {
  height: 24px;
  display: flex;
  background: linear-gradient(#6c6c6c, #4d4d4d 60%, #3e3e3e);
}
.qat {
  position: relative;
  width: 274px;
  flex: none;
}
.qat svg, .qat .caret { position: absolute; }
.q-new { left: 50px; top: 4px; }
.q-open { left: 74px; top: 5px; }
.q-save { left: 99px; top: 4px; }
.q-saveas { left: 122px; top: 4px; }
.q-plot { left: 146px; top: 4px; }
.q-c1 { left: 167px; top: 11px; }
.q-print { left: 181px; top: 5px; }
.q-undo { left: 205px; top: 5px; }
.q-c2 { left: 228px; top: 11px; }
.q-redo { left: 241px; top: 5px; }
.q-c3 { left: 263px; top: 11px; }

.workspace {
  width: 178px;
  height: 21px;
  flex: none;
  box-sizing: border-box;
  margin-top: 1px;
  display: flex;
  align-items: center;
  gap: 3px;
  padding: 0 6px 0 4px;
  background: linear-gradient(#e6e6e6, #d0d0d0);
  font-size: 11.5px;
  color: #1c1c1c;
  white-space: nowrap;
}
.workspace .caret { margin-left: auto; }
.qat-more {
  width: 16px;
  flex: none;
  height: 23px;
  background: linear-gradient(#d8d8d8, #888);
  display: flex;
  flex-direction: column;
  align-items: center;
  justify-content: center;
  gap: 2px;
}
.more-bar { width: 7px; height: 2px; background: #222; }
.glass {
  width: 332px;
  flex: none;
  display: flex;
  align-items: center;
  gap: 13px;
  padding-left: 20px;
  box-sizing: border-box;
  font-size: 11.5px;
  color: #1d2a3c;
  white-space: nowrap;
  background: linear-gradient(90deg, #5c8fc6 0, #93b1d0 12%, #a9b9ca 45%, #a3b6cb 80%, #6f9fd0 100%);
  border-bottom: 1px solid #d8e6f4;
}
.arrow-btn {
  width: 13px;
  flex: none;
  display: flex;
  align-items: center;
  justify-content: center;
  background: linear-gradient(#7a7a7a, #4c4c4c);
}
.caret-r {
  width: 0;
  height: 0;
  border-top: 4px solid transparent;
  border-bottom: 4px solid transparent;
  border-left: 5px solid #111;
}
.search {
  width: 179px;
  flex: none;
  height: 21px;
  margin-top: 1px;
  background: #fff;
  color: #8a8a8a;
  font-style: italic;
  font-size: 11px;
  line-height: 24px;
  padding-left: 3px;
  box-sizing: border-box;
  white-space: nowrap;
  overflow: hidden;
}
.info {
  width: 252px;
  flex: none;
  display: flex;
  align-items: center;
  color: #eaeaea;
  font-size: 11.5px;
  background: linear-gradient(#6e6e6e, #404040);
  box-sizing: border-box;
  padding-left: 5px;
  height: 23px;
  white-space: nowrap;
}
.i-user { margin-left: 7px; }
.signin { margin-left: 4px; }
.info .caret { border-left-width: 3px; border-right-width: 3px; border-top-width: 3px; }
.c-a { margin-left: 5px; }
.i-x { margin-left: 9px; }
.i-link { margin-left: 7px; }
.c-b { margin-left: 3px; }
.i-sep { width: 1px; height: 18px; background: #5a5a5a; margin-left: 7px; }
.i-help { margin-left: 10px; }
.c-c { margin-left: 7px; }
.help-q { font: bold 11px "Liberation Sans", sans-serif; fill: #fff; }
.frame {
  flex: 1;
  background: linear-gradient(90deg, #3e85cf, #4a90d8);
  border-left: 1px solid #333;
  display: flex;
  padding-left: 14px;
}
.frame-btns {
  display: flex;
  height: 16px;
  flex: 1;
  border: 1px solid #2a5f9a;
  border-top: 0;
  border-right: 0;
  border-radius: 0 0 0 4px;
  background: linear-gradient(#8cb8e2, #5b93cf);
}
.frame-btns > span {
  position: relative;
  display: flex;
  align-items: center;
  justify-content: center;
  border-right: 1px solid #3c74b0;
}
.frame-btns > span:last-child { border-right: 0; }
.f-min { width: 28px; }
.f-max { width: 28px; }
.f-close { flex: 1; }
.f-min i { width: 10px; height: 3px; margin-top: 3px; background: #fff; border: 1px solid #36598a; box-sizing: content-box; }
.f-max i { width: 7px; height: 6px; border: 1.5px solid #fff; outline: 1px solid #36598a; }
.f-max b { position: absolute; left: 11px; top: 2px; width: 7px; height: 6px; border: 1px solid #e8f0f8; }

/* вкладки */
.tabs {
  height: 20px;
  display: flex;
  align-items: stretch;
  padding-left: 46px;
  background: #3f3f3f;
  color: #e6e6e6;
  font-size: 11.5px;
  letter-spacing: -0.1px;
}
.tab {
  padding: 0 10px;
  line-height: 20px;
  white-space: nowrap;
}
.tab.active {
  color: #1f1f1f;
  background: linear-gradient(#fdfdfd, #e9e9e9);
  border-radius: 2px 2px 0 0;
  width: 62px;
  box-sizing: border-box;
  text-align: center;
  padding: 0;
  margin: 3px 1px 0 0;
  line-height: 17px;
}
.tab-toggle {
  display: flex;
  align-items: center;
  gap: 4px;
  margin-left: 21px;
}
.pill {
  width: 13px;
  height: 6px;
  background: #eee;
  border-radius: 2px;
  display: flex;
  align-items: center;
  justify-content: center;
}
.caret-up {
  border-left: 3px solid transparent;
  border-right: 3px solid transparent;
  border-bottom: 3px solid #333;
}
.tab-toggle .caret { border-left-width: 2.5px; border-right-width: 2.5px; border-top-width: 3px; }

/* лента */
.ribbon {
  height: 99px;
  display: flex;
  padding-left: 3px;
  background: #fff;
  box-sizing: border-box;
}
.panel {
  flex: none;
  margin-right: 3px;
  display: flex;
  flex-direction: column;
  box-shadow: 1px 0 0 #d4d4d4;
  height: 97px;
}
.p-draw { width: 258px; }
.p-edit { width: 253px; }
.p-ann { width: 91px; }
.p-layers { width: 210px; }
.p-block { width: 94px; }
.p-props { width: 159px; }
.p-util { width: 102px; }
.p-clip { width: 98px; }
.p-group { width: 71px; margin-right: 0; }

.body {
  flex: none;
  height: 80px;
  display: flex;
  padding-top: 6px;
  box-sizing: border-box;
}
.title {
  flex: none;
  height: 17px;
  line-height: 17px;
  background: linear-gradient(#eeeeee, #f6f6f6);
  text-align: center;
  font-size: 11.5px;
  color: #26263e;
  white-space: nowrap;
  position: relative;
}
.title .caret { margin-left: 4px; vertical-align: 1px; }
.props-title { padding-right: 12px; }
.launcher { position: absolute; right: 5px; top: 6px; }

.pl-1 { padding-left: 1px; }
.pl-2 { padding-left: 2px; }
.pl-4 { padding-left: 4px; }
.pl-5 { padding-left: 5px; }
.ml-4 { margin-left: 4px; }
.ml-5 { margin-left: 5px; }
.ml-8 { margin-left: 8px; }
.p-draw .body { padding-left: 2px; }

.big {
  flex: none;
  display: flex;
  flex-direction: column;
  align-items: center;
  white-space: nowrap;
  line-height: 16px;
  font-size: 11.5px;
}
.big-ico {
  height: 37px;
  display: flex;
  align-items: flex-start;
  justify-content: center;
}
.big .caret { margin-top: 1px; border-left-width: 2.5px; border-right-width: 2.5px; border-top-width: 3px; }
.w-36 { width: 36px; }
.w-46 { width: 46px; }
.w-48 { width: 48px; }
.w-52 { width: 52px; }
.w-54 { width: 54px; }
.w-64 { width: 64px; }
.w-70 { width: 70px; }
.w-76 { width: 76px; }
.w-98 { width: 98px; }
.a-glyph { overflow: visible; }
.a-glyph text {
  font: 40px "Liberation Sans", sans-serif;
  fill: #3a3a3a;
}

.col {
  flex: none;
  display: flex;
  flex-direction: column;
  gap: 2px;
}
.stack {
  flex: none;
  display: flex;
  flex-direction: column;
  gap: 2px;
}
.split { display: flex; height: 22px; }
.btn, .drop {
  height: 22px;
  box-sizing: border-box;
  display: flex;
  align-items: center;
  justify-content: center;
  border: 1px solid #c9c9c9;
  background: linear-gradient(#fcfcfc, #e9e9e9);
  flex: none;
}
.drop { border-left: 0; }
.drop .caret { border-left-width: 2.5px; border-right-width: 2.5px; border-top-width: 3px; }
.w11 { width: 11px; }
.w12 { width: 12px; }
.w13 { width: 13px; }
.w14 { width: 14px; }
.w23 { width: 23px; }
.w24 { width: 24px; }
.w25 { width: 25px; }
.btn.selected {
  background: linear-gradient(#dcecfb, #a8d0f0);
  border-color: #3d8fd0;
}
.rowitem {
  height: 22px;
  display: flex;
  align-items: center;
  gap: 4px;
  white-space: nowrap;
}
.mirror { margin-left: 3px; }
.icon-row { display: flex; gap: 4px; height: 22px; }
.btn-group { display: flex; }
.btn-group .btn + .btn { border-left: 0; }
.combo {
  height: 22px;
  box-sizing: border-box;
  display: flex;
  align-items: center;
  gap: 2px;
  padding: 0 6px 0 3px;
  border: 1px solid #c9c9c9;
  background: linear-gradient(#fcfcfc, #e9e9e9);
  white-space: nowrap;
  overflow: hidden;
  position: relative;
}
.combo > .caret { position: absolute; right: 4px; top: 8px; background: transparent; }
.combo-text { overflow: hidden; }
.w-208 { width: 208px; }
.w-137 { width: 137px; }
.cfg { padding-left: 2px; font-size: 11px; }
.layer { gap: 4px; padding-left: 5px; font-size: 11px; }
.layer .combo-text { margin-left: 1px; }
.swatch { background: #000; flex: none; }
.s14 { width: 14px; height: 14px; }
.s16 { width: 16px; height: 16px; }
.bar { flex: none; background: #000; }
.bar.thick { width: 64px; height: 10px; }
.bar.thin { width: 60px; height: 1px; margin-left: 5px; }
.prop-icons {
  width: 20px;
  display: flex;
  flex-direction: column;
  align-items: center;
  justify-content: space-between;
  padding: 2px 0;
  height: 70px;
  box-sizing: border-box;
}
.ribbon-gap {
  height: 7px;
  flex: none;
  background: linear-gradient(#6d6d6d, #555);
  margin-top: 0;
}

/* окно чертежа */
.viewport {
  position: relative;
  height: 481px;
  flex: none;
  background: #fff;
}
.viewport::before {
  content: "";
  position: absolute;
  left: 0;
  top: 0;
  bottom: 0;
  width: 2px;
  background: #a0a0a0;
  z-index: 1;
}
.drawing { shape-rendering: crispEdges; }
.drawing line { stroke: #000; stroke-width: 1; }
.vp-label {
  position: absolute;
  left: 6px;
  top: 5px;
  font: 500 11px/15px "Noto Sans", "Liberation Sans", sans-serif;
  color: #111;
  white-space: nowrap;
}
.ucs-y, .ucs-x {
  position: absolute;
  font: 200 16px/16px Inter, "Liberation Sans", sans-serif;
  color: #111;
}
.ucs-y { left: 18px; top: 400px; }
.ucs-x { left: 70px; top: 452px; }
.viewport::after {
  content: "";
  position: absolute;
  right: 0;
  top: 0;
  bottom: 0;
  width: 2px;
  background: #c8c8c8;
}

.vp-controls {
  position: absolute;
  left: 1303px;
  top: 9px;
  display: flex;
  gap: 8px;
  align-items: center;
}
.vc-min { width: 11px; height: 3px; background: #e8e8e8; border: 1px solid #8a8a8a; margin-top: 5px; }
.vc-max { width: 9px; height: 9px; border: 1.500px solid #8a8a8a; background: #f2f2f2; box-shadow: inset 0 0 0 2px #f2f2f2, inset 0 0 0 3px #aaa; }
.vc-close { width: 12px; }

.cube {
  position: absolute;
  left: 1261px;
  top: 30px;
  width: 96px;
  height: 96px;
  color: #bcbcbc;
  font: 14px/14px "Liberation Sans", sans-serif;
}
.cube span { position: absolute; }
.cube-ring { position: absolute; left: 0; top: 0; }
.c-n { left: 43px; top: 4px; }
.c-w { left: 5px; top: 41px; }
.c-e { left: 81px; top: 41px; }
.c-s { left: 42px; top: 79px; }
.c-face {
  position: absolute;
  left: 30px;
  top: 31px;
  width: 35px;
  height: 35px;
  box-sizing: border-box;
  border: 1px solid #a6a6a6;
  background: #f2f2f2;
  display: flex;
  align-items: center;
  justify-content: center;
}
.c-face span {
  position: static;
  display: block;
  width: 21px;
  height: 21px;
  background: #e4e5ea;
  color: #9a9aa2;
  font: 10px/21px "Liberation Serif", serif;
  text-align: center;
  transform: scaleX(0.85);
}
.ucs-pill {
  position: absolute;
  left: 1285px;
  top: 139px;
  width: 46px;
  height: 16px;
  border-radius: 4px;
  background: #ececf4;
  color: #a4a4ae;
  font: 10.5px/16px "Liberation Sans", sans-serif;
  display: flex;
  align-items: center;
  gap: 5px;
  padding-left: 4px;
  box-sizing: border-box;
}
.ucs-pill i {
  width: 0;
  height: 0;
  border-left: 5px solid transparent;
  border-right: 5px solid transparent;
  border-top: 5px solid #d0d0dc;
}
.navbar {
  position: absolute;
  left: 1327px;
  top: 180px;
  width: 36px;
  height: 215px;
  box-sizing: border-box;
  border: 2px solid #d4d4d4;
  border-radius: 6px;
  background: #fbfbfb;
}

/* вкладки листов */
.layout-tabs {
  position: relative;
  height: 19px;
  flex: none;
  background: #efefef;
  border-top: 1px solid #a8a8a8;
  box-sizing: border-box;
  display: flex;
  font-size: 11.5px;
  color: #111;
}
.lt-nav {
  display: flex;
  gap: 1px;
  padding: 1px 0 0 2px;
  width: 60px;
  flex: none;
}
.lt-nav span {
  width: 13px;
  height: 14px;
  background: linear-gradient(#f6f6f6, #dcdcdc);
  border: 1px solid #d0d0d0;
  box-sizing: border-box;
  display: flex;
  align-items: center;
  justify-content: center;
  gap: 1px;
}
.tri-l { width: 0; height: 0; border-top: 4px solid transparent; border-bottom: 4px solid transparent; border-right: 5px solid #555; }
.tri-r { width: 0; height: 0; border-top: 4px solid transparent; border-bottom: 4px solid transparent; border-left: 5px solid #555; }
.bar-l, .bar-r { width: 1px; height: 8px; background: #555; }
.lt-shape { position: absolute; left: 62px; top: 0; }
.lt-tab { position: absolute; top: 1px; line-height: 16px; }
.t1 { left: 74px; }
.t2 { left: 130px; }
.t3 { left: 178px; }

/* командная строка */
.cmd {
  flex: none;
  height: 56px;
  display: flex;
  border-top: 5px solid #595959;
  box-sizing: border-box;
  background: #fff;
}
.cmd-side {
  width: 22px;
  flex: none;
  background: #4d4d4d;
  position: relative;
}
.grip {
  position: absolute;
  left: 4px;
  top: 3px;
  width: 14px;
  height: 5px;
  background-image: radial-gradient(#aaa 50%, transparent 55%);
  background-size: 3px 3px;
}
.cmd-x { position: absolute; left: 6px; top: 15px; }
.cmd-w { position: absolute; left: 5px; top: 37px; }
.cmd-main { flex: 1; display: flex; flex-direction: column; }
.cmd-hist {
  height: 29px;
  flex: none;
  box-sizing: border-box;
  border-bottom: 1px solid #bbb;
  padding: 12px 0 0 3px;
  font: 13.25px/16px "Liberation Mono", monospace;
  color: #111;
}
.cmd-input {
  flex: 1;
  display: flex;
  align-items: center;
  padding: 1px 0 0 6px;
  gap: 3px;
  font: italic 13.4px/16px "Liberation Mono", monospace;
  color: #a2a2a2;
}
.prompt {
  width: 15px;
  height: 15px;
  box-sizing: border-box;
  border: 1px solid #9ab;
  background: linear-gradient(#fff, #ddd);
  display: flex;
  align-items: center;
  justify-content: center;
}
.cmd-input .caret { margin-right: 5px; border-left-width: 3px; border-right-width: 3px; }

/* строка состояния */
.status {
  position: relative;
  flex: 1;
  display: flex;
  align-items: stretch;
  background: linear-gradient(#8f8f8f, #6d6d6d);
  border-top: 1px solid #444;
  box-sizing: border-box;
  padding-bottom: 2px;
}
.coords {
  width: 203px;
  flex: none;
  padding: 4px 0 0 12px;
  box-sizing: border-box;
  font: 10.8px/16px "Liberation Sans", sans-serif;
  color: #111;
  background: linear-gradient(#6d6d6d, #9a9a9a 50%, #777);
  white-space: nowrap;
}
.st-group { display: flex; gap: 0; }
.st {
  width: 22px;
  flex: none;
  box-sizing: border-box;
  display: flex;
  align-items: center;
  justify-content: center;
  background: linear-gradient(#dcdcdc, #9c9c9c);
  border-right: 1px solid #777;
}
.st.on { background: linear-gradient(#e8f4f8 0, #cfe6ee 45%, #8cc4d4 55%, #a5d4e0 100%); }
.st-spacer { flex: 1; }
.rmodel {
  width: 61px;
  flex: none;
  text-align: center;
  font: 12px/22px "Liberation Sans", sans-serif;
  letter-spacing: -0.2px;
  color: #12203a;
  background: linear-gradient(#d6d6d6, #a4a4a4);
}
.w20 { width: 21px; }
.w22 { width: 22px; }
.w50 { width: 50px; }
.st.w23 { width: 23px; }
.st-block { width: 14px; flex: none; background: #777; }
.st-block.small { width: 4px; }
.anno { gap: 3px; font: 12px/22px "Liberation Sans", sans-serif; color: #111; }
.tray {
  width: 46px;
  flex: none;
  display: flex;
  align-items: center;
  justify-content: space-around;
  background: #6c6c6c;
}
.st-arrow {
  width: 18px;
  flex: none;
  display: flex;
  align-items: center;
  justify-content: center;
}
.taskstrip {
  position: absolute;
  left: 0;
  right: 0;
  bottom: 0;
  height: 1px;
  background: #3a78b8;
}
</style>

<style>
html, body { margin: 0; background: #fff; overflow: hidden; }
</style>
